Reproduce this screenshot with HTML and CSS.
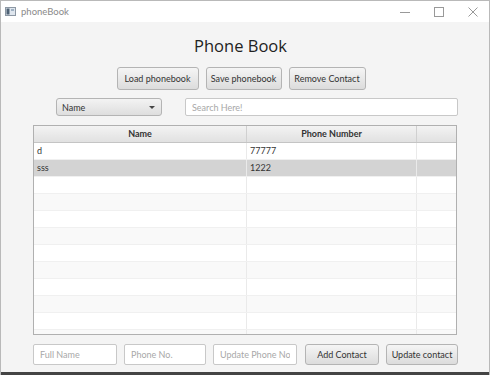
FILE: index.html
```html
<!DOCTYPE html>
<html lang="en">
<head>
    <meta charset="UTF-8">
    <title>phoneBook</title>
    <link rel="stylesheet" href="styles.css">
</head>
<body>
    <div class="window">
        <div class="titlebar">
            <svg class="app-icon" width="11" height="9" viewBox="0 0 11 9">
                <rect x="0.5" y="0.5" width="10" height="8" fill="#dfe6ee" stroke="#8c97a3"/>
                <rect x="1.5" y="1.5" width="3" height="6" fill="#4f6275"/>
                <rect x="6" y="2" width="3" height="2" fill="#9fb1c3"/>
            </svg>
            <span class="title">phoneBook</span>
            <div class="controls">
                <svg width="10" height="10" viewBox="0 0 10 10"><path d="M0 5.5h10" stroke="#999" stroke-width="1"/></svg>
                <svg width="10" height="10" viewBox="0 0 10 10"><rect x="0.5" y="0.5" width="9" height="9" fill="none" stroke="#999"/></svg>
                <svg width="10" height="10" viewBox="0 0 10 10"><path d="M0.5 0.5l9 9M9.5 0.5l-9 9" stroke="#999"/></svg>
            </div>
        </div>

        <div class="content">
            <h1>Phone Book</h1>

            <div class="actions">
                <button class="btn btn-load">Load phonebook</button>
                <button class="btn btn-save">Save phonebook</button>
                <button class="btn btn-remove">Remove Contact</button>
            </div>

            <div class="search-row">
                <div class="combo">
                    <span>Name</span>
                    <span class="arrow"></span>
                </div>
                <input class="field search" type="text" placeholder="Search Here!">
            </div>

            <div class="table">
                <div class="row head">
                    <div class="cell c1">Name</div>
                    <div class="cell c2">Phone Number</div>
                    <div class="cell c3"></div>
                </div>
                <div class="row">
                    <div class="cell c1">d</div>
                    <div class="cell c2">77777</div>
                    <div class="cell c3"></div>
                </div>
                <div class="row selected">
                    <div class="cell c1">sss</div>
                    <div class="cell c2">1222</div>
                    <div class="cell c3"></div>
                </div>
                <div class="row"><div class="cell c1"></div><div class="cell c2"></div><div class="cell c3"></div></div>
                <div class="row odd"><div class="cell c1"></div><div class="cell c2"></div><div class="cell c3"></div></div>
                <div class="row"><div class="cell c1"></div><div class="cell c2"></div><div class="cell c3"></div></div>
                <div class="row odd"><div class="cell c1"></div><div class="cell c2"></div><div class="cell c3"></div></div>
                <div class="row"><div class="cell c1"></div><div class="cell c2"></div><div class="cell c3"></div></div>
                <div class="row odd"><div class="cell c1"></div><div class="cell c2"></div><div class="cell c3"></div></div>
                <div class="row"><div class="cell c1"></div><div class="cell c2"></div><div class="cell c3"></div></div>
                <div class="row odd"><div class="cell c1"></div><div class="cell c2"></div><div class="cell c3"></div></div>
                <div class="row"><div class="cell c1"></div><div class="cell c2"></div><div class="cell c3"></div></div>
                <div class="row odd"><div class="cell c1"></div><div class="cell c2"></div><div class="cell c3"></div></div>
            </div>

            <div class="form-row">
                <input class="field f-name" type="text" placeholder="Full Name">
                <input class="field f-phone" type="text" placeholder="Phone No.">
                <input class="field f-update" type="text" placeholder="Update Phone No.">
                <button class="btn btn-add">Add Contact</button>
                <button class="btn btn-update">Update contact</button>
            </div>
        </div>
        <div class="taskbar"></div>
    </div>
</body>
</html>
```

FILE: styles.css
```css
body {
    margin: 0;
    font-family: Lato, "Open Sans", sans-serif;
    background-color: #f4f4f4;
}

.window {
    width: 490px;
    height: 375px;
    box-sizing: border-box;
    border: 1px solid #b9b9b9;
    border-bottom: none;
    display: flex;
    flex-direction: column;
    overflow: hidden;
}

.titlebar {
    height: 21px;
    background-color: #fff;
    display: flex;
    align-items: center;
    padding-left: 4px;
}

.title {
    font-size: 9.5px;
    color: #8a8a8a;
    margin-left: 5px;
}

.controls {
    margin-left: auto;
    display: flex;
    gap: 24px;
    padding-right: 11px;
}

.content {
    flex: 1;
    background-color: #f4f4f4;
    display: flex;
    flex-direction: column;
}

h1 {
    margin: 10px 0 0 0;
    height: 28px;
    line-height: 28px;
    font-family: "Open Sans", sans-serif;
    font-size: 16.5px;
    font-weight: normal;
    color: #222;
    text-align: center;
    padding-right: 9px;
}

.btn {
    font-family: inherit;
    font-size: 9px;
    color: #333;
    background: linear-gradient(#f5f5f5, #dcdcdc);
    border: 1px solid #b4b4b4;
    border-radius: 3px;
    padding: 0;
    box-sizing: border-box;
}

.actions {
    margin-top: 7px;
    display: flex;
    justify-content: center;
    gap: 7px;
    padding-right: 8px;
}

.actions .btn {
    height: 23px;
}

.btn-load { width: 82px; }
.btn-save { width: 76px; }
.btn-remove { width: 77px; }

.search-row {
    margin-top: 8px;
    display: flex;
    padding-left: 55px;
    padding-right: 31px;
    gap: 23px;
    height: 18px;
}

.combo {
    width: 106px;
    box-sizing: border-box;
    border: 1px solid #b4b4b4;
    border-radius: 3px;
    background: linear-gradient(#f3f3f3, #dedede);
    display: flex;
    align-items: center;
    justify-content: space-between;
    padding: 0 6px 0 5px;
    font-size: 9px;
    color: #333;
}

.arrow {
    width: 0;
    height: 0;
    border-left: 3px solid transparent;
    border-right: 3px solid transparent;
    border-top: 3px solid #444;
}

.field {
    font-family: inherit;
    font-size: 9px;
    color: #333;
    background-color: #fff;
    border: 1px solid #c8c8c8;
    border-radius: 2px;
    box-sizing: border-box;
    padding: 0 6px;
    outline: none;
}

.field::placeholder {
    color: #a8a8a8;
}

.search {
    flex: 1;
    height: 18px;
}

.table {
    margin: 9px 32px 0 32px;
    height: 210px;
    box-sizing: border-box;
    border: 1px solid #b0b0b0;
    background-color: #fff;
    overflow: hidden;
}

.row {
    display: flex;
    height: 17px;
    box-sizing: border-box;
    border-bottom: 1px solid #f0f0f0;
    font-size: 9px;
    color: #333;
}

.row.odd {
    background-color: #f9f9f9;
}

.row.selected {
    background-color: #d3d3d3;
}

.cell {
    box-sizing: border-box;
    border-right: 1px solid #eaeaea;
    padding-left: 3px;
    line-height: 16px;
    white-space: nowrap;
}

.c1 { width: 213px; }
.c2 { width: 170px; }
.c3 { flex: 1; border-right: none; }

.row.head {
    background: linear-gradient(#f3f3f3, #e1e1e1);
    border-bottom: 1px solid #c4c4c4;
    font-weight: bold;
}

.row.head .cell {
    text-align: center;
    padding-left: 0;
    border-right: 1px solid #d0d0d0;
}

.row.head .c3 {
    border-right: none;
}

.form-row {
    margin-top: 9px;
    display: flex;
    padding-left: 32px;
    gap: 7px;
    height: 21px;
}

.form-row .field {
    height: 21px;
}

.f-name { width: 84px; }
.f-phone { width: 82px; }
.f-update { width: 84px; }

.btn-add {
    width: 74px;
    margin-left: 1px;
}

.btn-update {
    width: 72px;
}

.taskbar {
    height: 3px;
    margin-top: auto;
    background-color: #444;
}
```
